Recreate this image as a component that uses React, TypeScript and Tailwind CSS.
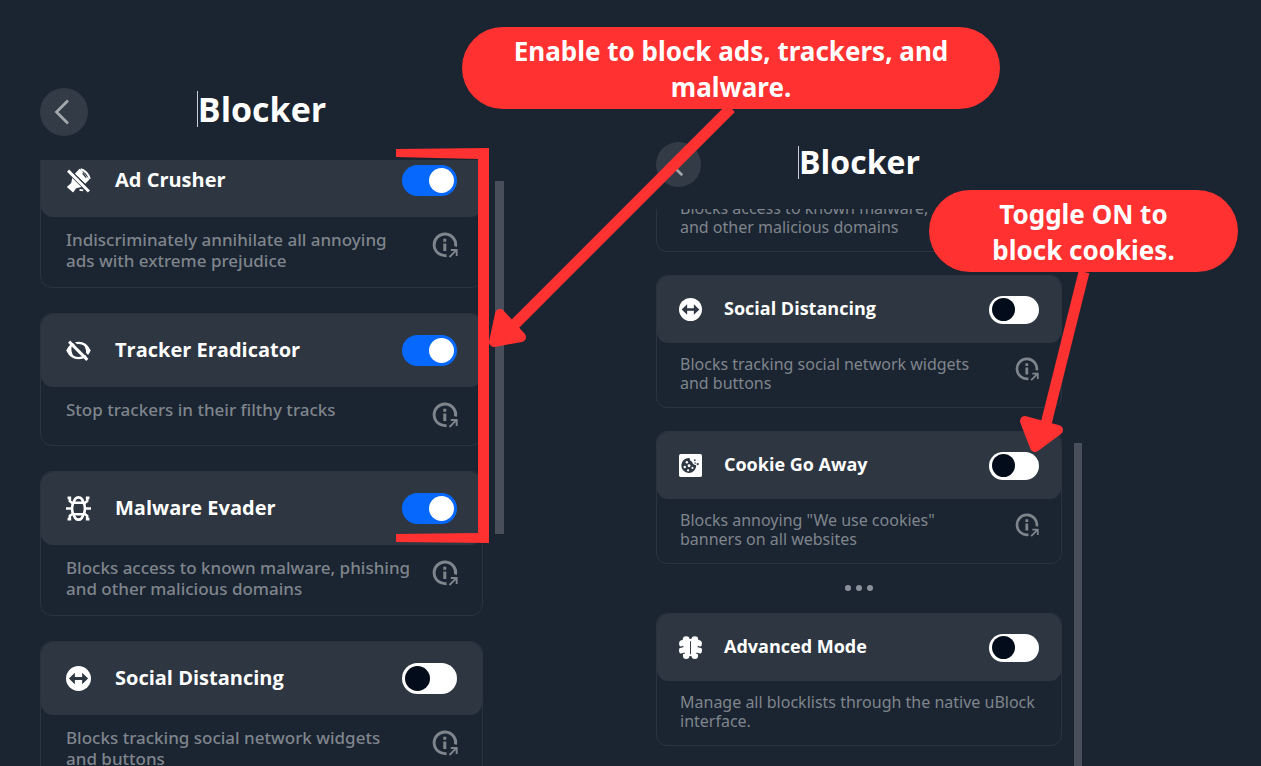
import React, { useId, useState } from "react";

type Size = "large" | "compact";

const SIZES = {
  large: {
    card: "rounded-[12px]",
    header: "h-[73px] rounded-[12px] pl-[25px] pr-[25px] gap-6",
    icon: "size-[25px]",
    name: "text-[20px]",
    body: "pl-[25px] pr-6 pt-3 pb-4 text-[17px] leading-[21px] font-medium",
    info: "size-[26px] mt-[3px] mb-px",
    track: "h-[31px] w-[55px]",
    knob: "size-[25px]",
    on: "translate-x-[27px]",
    off: "translate-x-[3px]",
    back: "size-12",
    title: "text-[34px] leading-[42px]",
    caret: "h-9",
  },
  compact: {
    card: "rounded-[11px]",
    header: "h-[67px] rounded-[11px] px-[22px] gap-[22px]",
    icon: "size-[23px]",
    name: "text-[18px]",
    body: "pl-[23px] pr-[22px] pt-3 pb-[14px] text-[16px] leading-[19px]",
    info: "size-6 mt-[2px]",
    track: "h-[28px] w-[50px]",
    knob: "size-[23px]",
    on: "translate-x-[24px]",
    off: "translate-x-[3px]",
    back: "size-[45px]",
    title: "text-[32px] leading-[40px]",
    caret: "h-[33px]",
  },
};

function AdIcon({ className }: { className: string }) {
  return (
    <svg viewBox="0 0 24 24" className={className} fill="none" aria-hidden="true">
      <path d="M8.500 5.500 13 .8 16 3.500 22.500 11 18.500 15Z" fill="currentColor" />
      <path d="M14 1.300c3.500.2 8 4.700 8.800 9.200" stroke="currentColor" strokeWidth="2" />
      <path d="M16 5l3.500 4.200" stroke="#2d3641" strokeWidth="1.300" />
      <path d="M6 9.500 14.800 18.300 9.800 19.500 6.800 23.500 .8 18.200 5 14.500Z" fill="currentColor" />
      <path d="M13 21l3.500.5" stroke="currentColor" strokeWidth="1.800" />
      <path d="M3 .8 24 21.500" stroke="#2d3641" strokeWidth="1" />
      <path d="M2 2.500 22 22.500" stroke="currentColor" strokeWidth="2.800" />
    </svg>
  );
}

function EyeOffIcon({ className }: { className: string }) {
  return (
    <svg viewBox="0 0 24 24" className={className} fill="none" aria-hidden="true">
      <path d="M1.500 12C3.500 7.500 7.500 4.700 12 4.700S20.500 7.500 22.500 12C20.500 16.500 16.500 19.300 12 19.300S3.500 16.500 1.500 12Z" stroke="currentColor" strokeWidth="2" />
      <path d="M.500 12c1-2.800 2.900-4.700 5.500-6C4.500 10 5 14 7.500 18 4.500 16.800 2 14.800 .500 12ZM23.500 12c-1 2.500-2.500 4.500-4.800 5.800C20 14 19.500 10 16.500 6 19.500 7.200 22 9.200 23.500 12Z" fill="currentColor" />
      <path d="M5.500 2.500 23 19.500" stroke="#2d3641" strokeWidth="2" />
      <path d="M3 3.500 20.500 21" stroke="currentColor" strokeWidth="2.800" />
    </svg>
  );
}

function BugIcon({ className }: { className: string }) {
  return (
    <svg viewBox="0 0 24 24" className={className} fill="none" stroke="currentColor" strokeWidth="2.500" aria-hidden="true">
      <path d="M7.500 6.500C8 3 9.500 1.300 12 1.300s4 1.700 4.500 5.200" />
      <path d="M7 6.500h10c1.500 3.500 1.500 7.500 0 11H7c-1.500-3.500-1.500-7.500 0-11Z" />
      <path d="M7.500 17.500c.5 3.500 2 5.200 4.500 5.200s4-1.700 4.500-5.200" />
      <path d="M0 12h6M18 12h6M1.500 1.800h2.200V5L7 7.500M22.500 1.800h-2.200V5L17 7.500M1.500 22.200h2.200V19L7 16.500M22.500 22.200h-2.200V19L17 16.500" />
    </svg>
  );
}

function DistanceIcon({ className }: { className: string }) {
  return (
    <svg viewBox="0 0 24 24" className={className} aria-hidden="true">
      <circle cx="12" cy="12" r="12" fill="currentColor" />
      <path d="M2.800 12 8.500 6.500v4.100h7V6.500L21.200 12l-5.700 5.500v-4.100h-7v4.100Z" fill="#2d3641" />
    </svg>
  );
}

function CookieIcon({ className }: { className: string }) {
  return (
    <svg viewBox="0 0 24 24" className={className} aria-hidden="true">
      <rect width="24" height="24" rx="1.800" fill="currentColor" />
      <path d="M11 4.200c.2 2 1 3.500 2.700 4 .3 2.200 1.800 3.300 4.300 3.600A7.800 7.800 0 1 1 11 4.200Z" fill="#2d3641" />
      <g fill="currentColor">
        <circle cx="8.200" cy="8.500" r="1.300" />
        <circle cx="6" cy="13.500" r="1.300" />
        <circle cx="10.500" cy="12.300" r="1.500" />
        <circle cx="14" cy="14.500" r="1.100" />
        <circle cx="9.500" cy="17" r="1.200" />
      </g>
      <g fill="#2d3641">
        <circle cx="16.500" cy="6.500" r=".9" />
        <circle cx="19.500" cy="10.500" r="1.200" />
        <circle cx="16.800" cy="9.500" r=".8" />
      </g>
    </svg>
  );
}

function BrainIcon({ className }: { className: string }) {
  return (
    <svg viewBox="0 0 24 24" className={className} aria-hidden="true">
      <g fill="currentColor">
        <circle cx="7.500" cy="3.800" r="3.600" />
        <circle cx="3.800" cy="8" r="3.700" />
        <circle cx="3.500" cy="15" r="3.500" />
        <circle cx="7.500" cy="20.500" r="3.400" />
        <circle cx="16.500" cy="3.800" r="3.600" />
        <circle cx="20.200" cy="8" r="3.700" />
        <circle cx="20.500" cy="15" r="3.500" />
        <circle cx="16.500" cy="20.500" r="3.400" />
        <rect x="5" y="3" width="14" height="18" />
      </g>
      <path d="M12 5.500v13.500" stroke="#2d3641" strokeWidth="1" fill="none" />
      <path d="M0 11.600h2.500l2-1M24 11.600h-2.500l-2-1M2 19l4-1.200M22 19l-4-1.200M12 0v2.500M12 21.500V24" stroke="#2d3641" strokeWidth="1.200" fill="none" />
    </svg>
  );
}

function InfoIcon({ className }: { className: string }) {
  return (
    <svg viewBox="0 0 26 26" className={className} fill="none" stroke="currentColor" aria-hidden="true">
      <path d="M14.500 23.500A10.800 10.800 0 1 1 23.600 14.500" strokeWidth="2.900" />
      <path d="M12.800 11.500v7.500M12.800 6.800v2.900" strokeWidth="3" />
      <path d="M17.500 25l6.800-6.800M18.800 18h5.900v5.900" strokeWidth="1.900" />
    </svg>
  );
}

function Toggle({ id, size, initial }: { id: string; size: Size; initial: boolean }) {
  const [on, setOn] = useState(initial);
  const s = SIZES[size];
  return (
    <span className={`relative flex shrink-0 items-center rounded-full ${s.track} ${on ? "bg-[#0768fd]" : "bg-white"}`}>
      <input
        id={id}
        type="checkbox"
        role="switch"
        checked={on}
        onChange={() => setOn(!on)}
        className="absolute inset-0 size-full cursor-pointer appearance-none rounded-full"
      />
      <span className={`pointer-events-none rounded-full ${s.knob} ${on ? `bg-white ${s.on}` : `bg-[#020c1a] ${s.off}`}`} />
    </span>
  );
}

interface CardProps {
  size: Size;
  icon: React.ComponentType<{ className: string }>;
  name: string;
  children: React.ReactNode;
  on?: boolean;
  info?: boolean;
}

function Card({ size, icon: Icon, name, children, on = false, info = true }: CardProps) {
  const id = useId();
  const s = SIZES[size];
  return (
    <article className={`shrink-0 border border-[#2a333f] ${s.card}`}>
      <div className={`flex items-center bg-[#2d3641] text-white ${s.header}`}>
        <Icon className={`shrink-0 ${s.icon}`} />
        <label htmlFor={id} className={`flex-1 pb-[2px] font-bold ${s.name}`}>
          {name}
        </label>
        <Toggle id={id} size={size} initial={on} />
      </div>
      <div className={`flex items-start justify-between font-['Noto_Sans',sans-serif] text-[#7f858c] ${s.body}`}>
        <p className="whitespace-nowrap">{children}</p>
        {info && (
          <button type="button" aria-label={`About ${name}`} className="shrink-0">
            <InfoIcon className={s.info} />
          </button>
        )}
      </div>
    </article>
  );
}

function PanelHeader({ size }: { size: Size }) {
  const s = SIZES[size];
  return (
    <header className="grid grid-cols-[1fr_auto_1fr] items-start">
      <button type="button" aria-label="Back" className={`flex items-center justify-center rounded-full bg-[#323b46] text-[#a3a8ad] ${s.back}`}>
        <svg viewBox="0 0 48 48" className="size-full" fill="none" aria-hidden="true">
          <path d="M28 12.500 16.500 24 28 35.500" stroke="currentColor" strokeWidth="2.800" />
        </svg>
      </button>
      <div className="flex items-center">
        <span className={`w-px bg-[#c9ccd6] ${s.caret}`} />
        <h1 className={`font-bold text-white ${s.title}`}>Blocker</h1>
      </div>
    </header>
  );
}

function Callout({ className, children }: { className: string; children: React.ReactNode }) {
  return (
    <p className={`absolute rounded-[41px] bg-[#ff3131] pt-[6px] pb-1 text-center font-['Noto_Sans',sans-serif] text-[26px] leading-9 font-bold text-white ${className}`}>
      {children}
    </p>
  );
}

export default function App() {
  return (
    <main className="relative flex h-screen overflow-hidden bg-[#1b2431] pl-10 font-['Open_Sans',sans-serif]">
      <section className="flex flex-col pt-[88px]">
        <div className="w-[443px]">
          <PanelHeader size="large" />
        </div>
        <div className="mt-6 flex min-h-0 flex-1 gap-3 overflow-hidden">
          <div className="-mt-[17px] flex w-[443px] flex-col gap-[25px]">
            <Card size="large" icon={AdIcon} name="Ad Crusher" on>
              Indiscriminately annihilate all annoying
              <br />
              ads with extreme prejudice
            </Card>
            <Card size="large" icon={EyeOffIcon} name="Tracker Eradicator" on>
              Stop trackers in their filthy tracks
            </Card>
            <Card size="large" icon={BugIcon} name="Malware Evader" on>
              Blocks access to known malware, phishing
              <br />
              and other malicious domains
            </Card>
            <Card size="large" icon={DistanceIcon} name="Social Distancing">
              Blocks tracking social network widgets
              <br />
              and buttons
            </Card>
          </div>
          <div className="mt-[21px] h-[353px] w-[9px] bg-[#484f5a]" />
        </div>
      </section>

      <section className="ml-[152px] flex flex-col pt-[142px]">
        <div className="w-[406px]">
          <PanelHeader size="compact" />
        </div>
        <div className="mt-[22px] flex min-h-0 flex-1 gap-3 overflow-hidden">
          <div className="-mt-[10px] flex w-[406px] flex-col gap-[23px]">
            <article className="shrink-0 rounded-b-[11px] border border-t-0 border-[#2a333f] pb-[14px] pl-[23px] font-['Noto_Sans',sans-serif] text-[16px] leading-[19px] text-[#7f858c]">
              <p className="whitespace-nowrap">
                Blocks access to known malware,
                <br />
                and other malicious domains
              </p>
            </article>
            <Card size="compact" icon={DistanceIcon} name="Social Distancing">
              Blocks tracking social network widgets
              <br />
              and buttons
            </Card>
            <Card size="compact" icon={CookieIcon} name="Cookie Go Away">
              Blocks annoying "We use cookies"
              <br />
              banners on all websites
            </Card>
            <div className="-mt-px flex h-1 items-center justify-center gap-[5px]">
              <span className="size-[6px] rounded-full bg-[#8b919a]" />
              <span className="size-[6px] rounded-full bg-[#8b919a]" />
              <span className="size-[6px] rounded-full bg-[#8b919a]" />
            </div>
            <Card size="compact" icon={BrainIcon} name="Advanced Mode" info={false}>
              Manage all blocklists through the native uBlock
              <br />
              interface.
            </Card>
          </div>
          <div className="mt-[234px] w-[8px] bg-[#484f5a]" />
        </div>
      </section>

      <svg width="1261" height="766" viewBox="0 0 1261 766" className="pointer-events-none absolute top-0 left-0" aria-hidden="true">
        <path d="M396 149 489 148V543L396 542V534L478 533V159L396 157Z" fill="#ff3131" />
        <path d="M731 108 512 327" stroke="#ff3131" strokeWidth="11" />
        <path d="M494 342 500 314 521 337Z" fill="#ff3131" stroke="#ff3131" strokeWidth="10" strokeLinejoin="round" />
        <path d="M1084 272 1046 424" stroke="#ff3131" strokeWidth="11" />
        <path d="M1035 447 1025 421 1058 430Z" fill="#ff3131" stroke="#ff3131" strokeWidth="10" strokeLinejoin="round" />
      </svg>

      <Callout className="top-[27px] left-[462px] w-[538px]">
        Enable to block ads, trackers, and
        <br />
        malware.
      </Callout>
      <Callout className="top-[190px] left-[929px] w-[309px]">
        Toggle ON to
        <br />
        block cookies.
      </Callout>
    </main>
  );
}
